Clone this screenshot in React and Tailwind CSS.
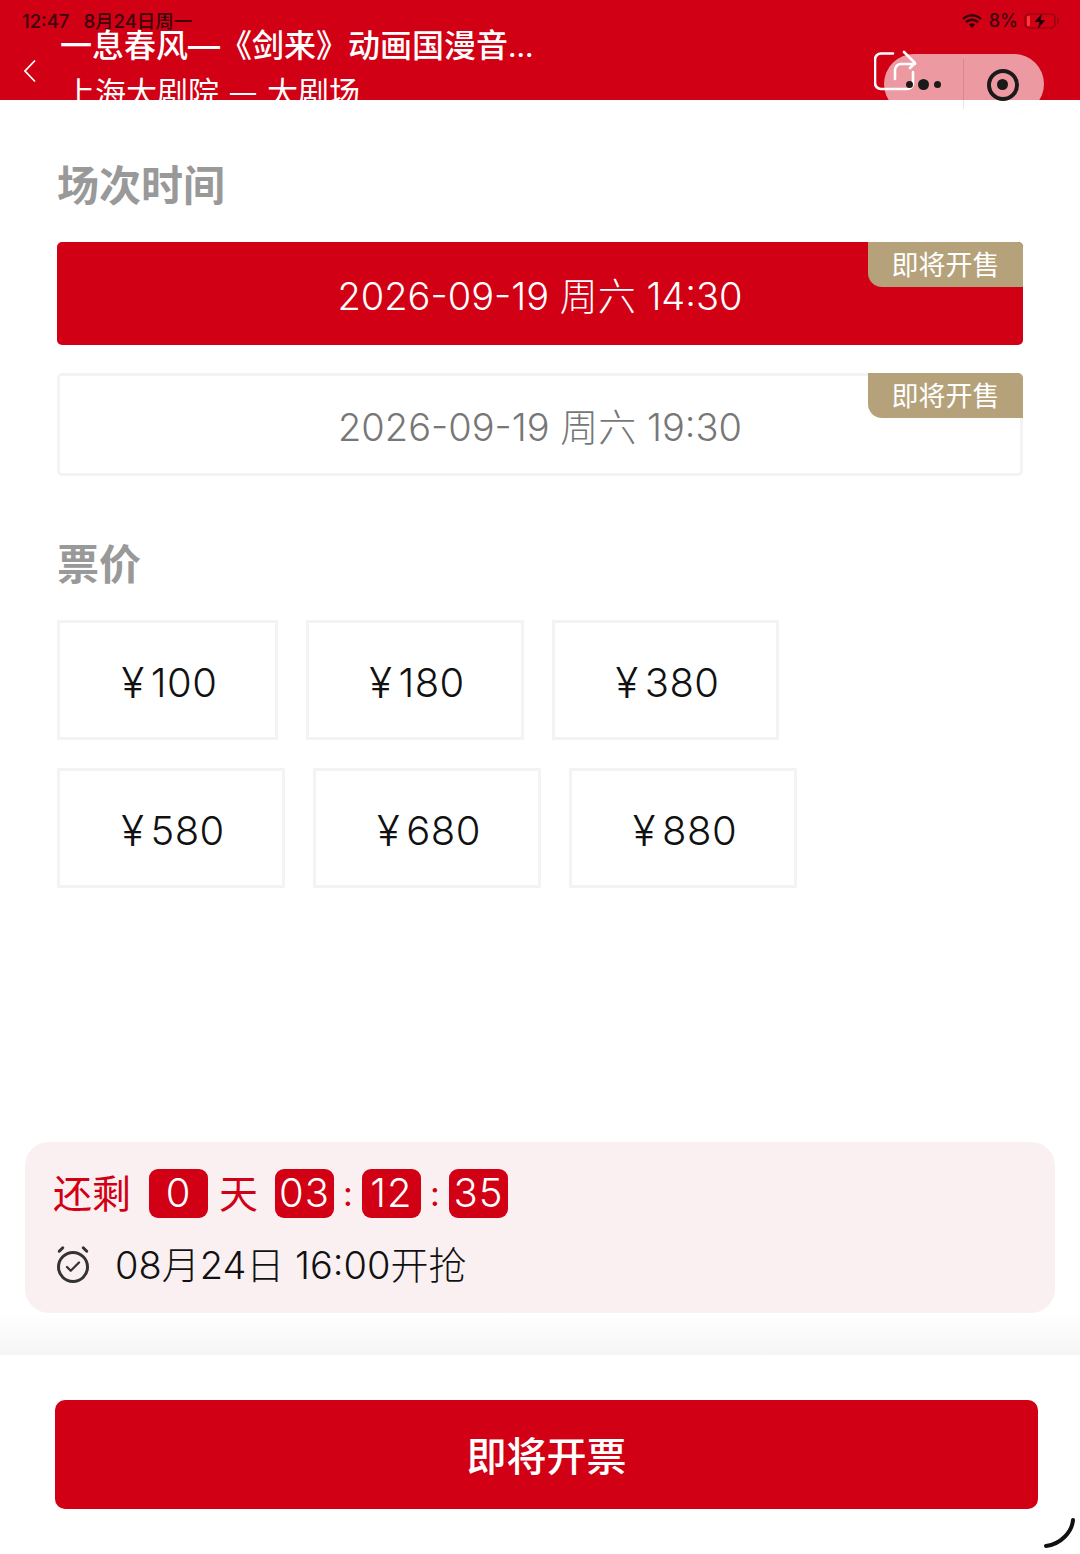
import { Check } from 'lucide-react';

const FONT = 'font-["Inter","Noto_Sans_CJK_SC",sans-serif]';

const sessions = [
  { label: '2026-09-19 周六 14:30', active: true },
  { label: '2026-09-19 周六 19:30', active: false },
];

const priceRows = [
  [
    { label: '100', w: 'w-[221px]' },
    { label: '180', w: 'w-[218px]' },
    { label: '380', w: 'w-[227px]' },
  ],
  [
    { label: '580', w: 'w-[228px]' },
    { label: '680', w: 'w-[228px]' },
    { label: '880', w: 'w-[228px]' },
  ],
];

function Digit({ children }) {
  return (
    <span className="flex h-[49px] w-[59px] items-center justify-center rounded-[9px] bg-[#d20014] pb-[3px] text-[40px] font-light tracking-[1px] text-white">
      {children}
    </span>
  );
}

function StatusBar() {
  return (
    <>
      <div className="absolute left-[22px] top-[10px] flex gap-[14px] text-[18.5px] font-medium leading-[22px] text-[#3a060c]">
        <span>12:47</span>
        <span>8月24日周一</span>
      </div>
      <div className="absolute right-[20px] top-[10px] flex items-center gap-[6px] text-[18px] font-medium leading-[22px] text-[#3a060c]">
        <svg width="20" height="14" viewBox="0 0 20 14" className="mr-[1px]">
          <path d="M1 5a13 13 0 0 1 18 0M4 8a9 9 0 0 1 12 0" fill="none" stroke="#2a0408" strokeWidth="2.4" />
          <path d="M7 10.6a4.5 4.5 0 0 1 6 0L10 14z" fill="#2a0408" />
        </svg>
        <span>8%</span>
        <svg width="36" height="16" viewBox="0 0 36 16">
          <rect x="1" y="1" width="30" height="14" rx="4" fill="none" stroke="#8a0410" strokeWidth="1.2" />
          <rect x="3" y="3" width="3" height="10" rx="1" fill="#ff3a3a" />
          <path d="M34 6v4" stroke="#8a0410" strokeWidth="1.6" strokeLinecap="round" />
          <path d="M18 0.5 10.5 9h5L14 15.5 21.5 7h-5z" fill="#1c0306" />
        </svg>
      </div>
    </>
  );
}

function Capsule() {
  return (
    <div className="absolute left-[884px] top-[54px] flex h-[60px] w-[160px] items-center rounded-[30px] bg-white/60 shadow-[0_0_1px_rgba(0,0,0,0.08)]">
      <div className="flex h-full w-[79px] items-center justify-center gap-[5px] pt-[1px]">
        <span className="h-[7px] w-[7px] rounded-full bg-[#1a1a1a]" />
        <span className="h-[11px] w-[11px] rounded-full bg-[#1a1a1a]" />
        <span className="h-[7px] w-[7px] rounded-full bg-[#1a1a1a]" />
      </div>
      <span className="h-[50px] w-px bg-black/10" />
      <div className="flex flex-1 items-center justify-center pr-[3px] pt-[1px]">
        <span className="flex h-[32px] w-[32px] items-center justify-center rounded-full border-[4px] border-[#1a1a1a]">
          <span className="h-[11px] w-[11px] rounded-full bg-[#1a1a1a]" />
        </span>
      </div>
    </div>
  );
}

export default function App() {
  return (
    <div className={`relative flex h-[1554px] w-[1080px] flex-col overflow-hidden bg-white ${FONT}`}>
      <header className="relative h-[100px] shrink-0 overflow-hidden bg-[#d20014] text-white">
        <StatusBar />
        <svg width="14" height="24" viewBox="0 0 14 24" className="absolute left-[23px] top-[59px]">
          <path d="M12 1.5 2 12l10 10.5" fill="none" stroke="white" strokeWidth="1.8" />
        </svg>
        <div className="absolute left-[60px] top-[25px] whitespace-nowrap text-[32px] font-medium leading-[42px]">
          一息春风—《剑来》动画国漫音<span className="text-[28px]">...</span>
        </div>
        <div className="absolute left-[64px] top-[74px] flex gap-[11px] whitespace-nowrap text-[31px] leading-[38px]">
          <span>上海大剧院</span>
          <span className="text-[26px]">—</span>
          <span>大剧场</span>
        </div>
        <svg width="50" height="44" viewBox="0 0 50 44" fill="none" stroke="white" strokeWidth="2.6" strokeLinecap="round" strokeLinejoin="round" className="absolute left-[874px] top-[50px]">
          <path d="M19 3.5H7a6 6 0 0 0-6 6V33a6 6 0 0 0 6 6H33a6 6 0 0 0 6-6V22" />
          <path d="M21 29V20a6 6 0 0 1 6-6H41" />
          <path d="M30 2l11 11-5 5" />
        </svg>
      </header>
      <Capsule />

      <main className="flex-1 px-[57px] pt-[60px]">
        <h2 className="text-[42px] font-bold leading-[52px] text-[#999999]">场次时间</h2>
        <div className="mt-[30px] flex flex-col gap-[28px]">
          {sessions.map((s) => (
            <div
              key={s.label}
              className={`relative flex h-[103px] items-center justify-center rounded-[5px] pt-[6px] text-[38px] font-light ${
                s.active ? 'bg-[#d20014] text-white' : 'border-[3px] border-[#f3f3f3] text-[#777777]'
              }`}
            >
              {s.label}
              <span className={`absolute flex h-[45px] w-[155px] items-center justify-center rounded-tr-[5px] rounded-bl-[14px] bg-[#b5a27a] pt-[4px] text-[27px] font-normal text-white ${s.active ? 'right-0 top-0' : 'right-[-3px] top-[-3px]'}`}>
                即将开售
              </span>
            </div>
          ))}
        </div>

        <h2 className="mt-[63px] text-[42px] font-bold leading-[52px] text-[#999999]">票价</h2>
        <div className="mt-[29px] flex flex-col gap-[28px]">
          {priceRows.map((row, i) => (
            <div key={i} className="flex gap-[28px]">
              {row.map((p) => (
                <div key={p.label} className={`flex h-[120px] items-center justify-center border-[3px] border-[#f3f3f3] pl-[4px] pt-[5px] text-[40px] font-light tracking-[0.5px] text-[#111111] ${p.w}`}>
                  <span className="mr-[6px] text-[42px]">¥</span>{p.label}
                </div>
              ))}
            </div>
          ))}
        </div>
      </main>

      <section className="mx-[25px] flex h-[171px] shrink-0 flex-col rounded-[24px] bg-[#fbf0f1] pl-[28px] pt-[27px]">
        <div className="flex items-center text-[39px] leading-[49px] text-[#d20014]">
          <span className="mr-[18px] w-[78px] whitespace-nowrap">还剩</span>
          <Digit>0</Digit>
          <span className="ml-[11px] mr-[18px] w-[38px] text-center">天</span>
          <Digit>03</Digit>
          <span className="w-[28px] text-center text-[34px]">:</span>
          <Digit>12</Digit>
          <span className="w-[28px] text-center text-[34px]">:</span>
          <Digit>35</Digit>
        </div>
        <div className="mt-[23px] flex items-center text-[38px] font-light leading-[48px] text-[#111111]">
          <span className="relative ml-[4px] mr-[26px] mt-[3px] flex h-[32px] w-[32px] items-center justify-center rounded-full border-[3px] border-[#333333]">
            <Check size={18} strokeWidth={3} className="text-[#333333]" />
            <span className="absolute left-[-3px] top-[-6px] h-[3px] w-[8px] -rotate-45 rounded-full bg-[#333333]" />
            <span className="absolute right-[-3px] top-[-6px] h-[3px] w-[8px] rotate-45 rounded-full bg-[#333333]" />
          </span>
          <span className="whitespace-nowrap">08月24日 16:00开抢</span>
        </div>
      </section>

      <div className="h-[42px] shrink-0 bg-gradient-to-b from-white to-[#f5f5f5]" />

      <footer className="h-[199px] shrink-0 bg-white px-[55px] pt-[45px]">
        <button className="flex h-[109px] w-[983px] items-center justify-center rounded-[10px] bg-[#d20014] pt-[4px] text-[40px] font-medium text-white">
          即将开票
        </button>
      </footer>

      <svg width="34" height="34" viewBox="0 0 34 34" className="absolute left-[1043px] top-[1517px]">
        <path d="M30 3C29 15 18 27 3 29" fill="none" stroke="#111111" strokeWidth="4" strokeLinecap="round" />
      </svg>
    </div>
  );
}
